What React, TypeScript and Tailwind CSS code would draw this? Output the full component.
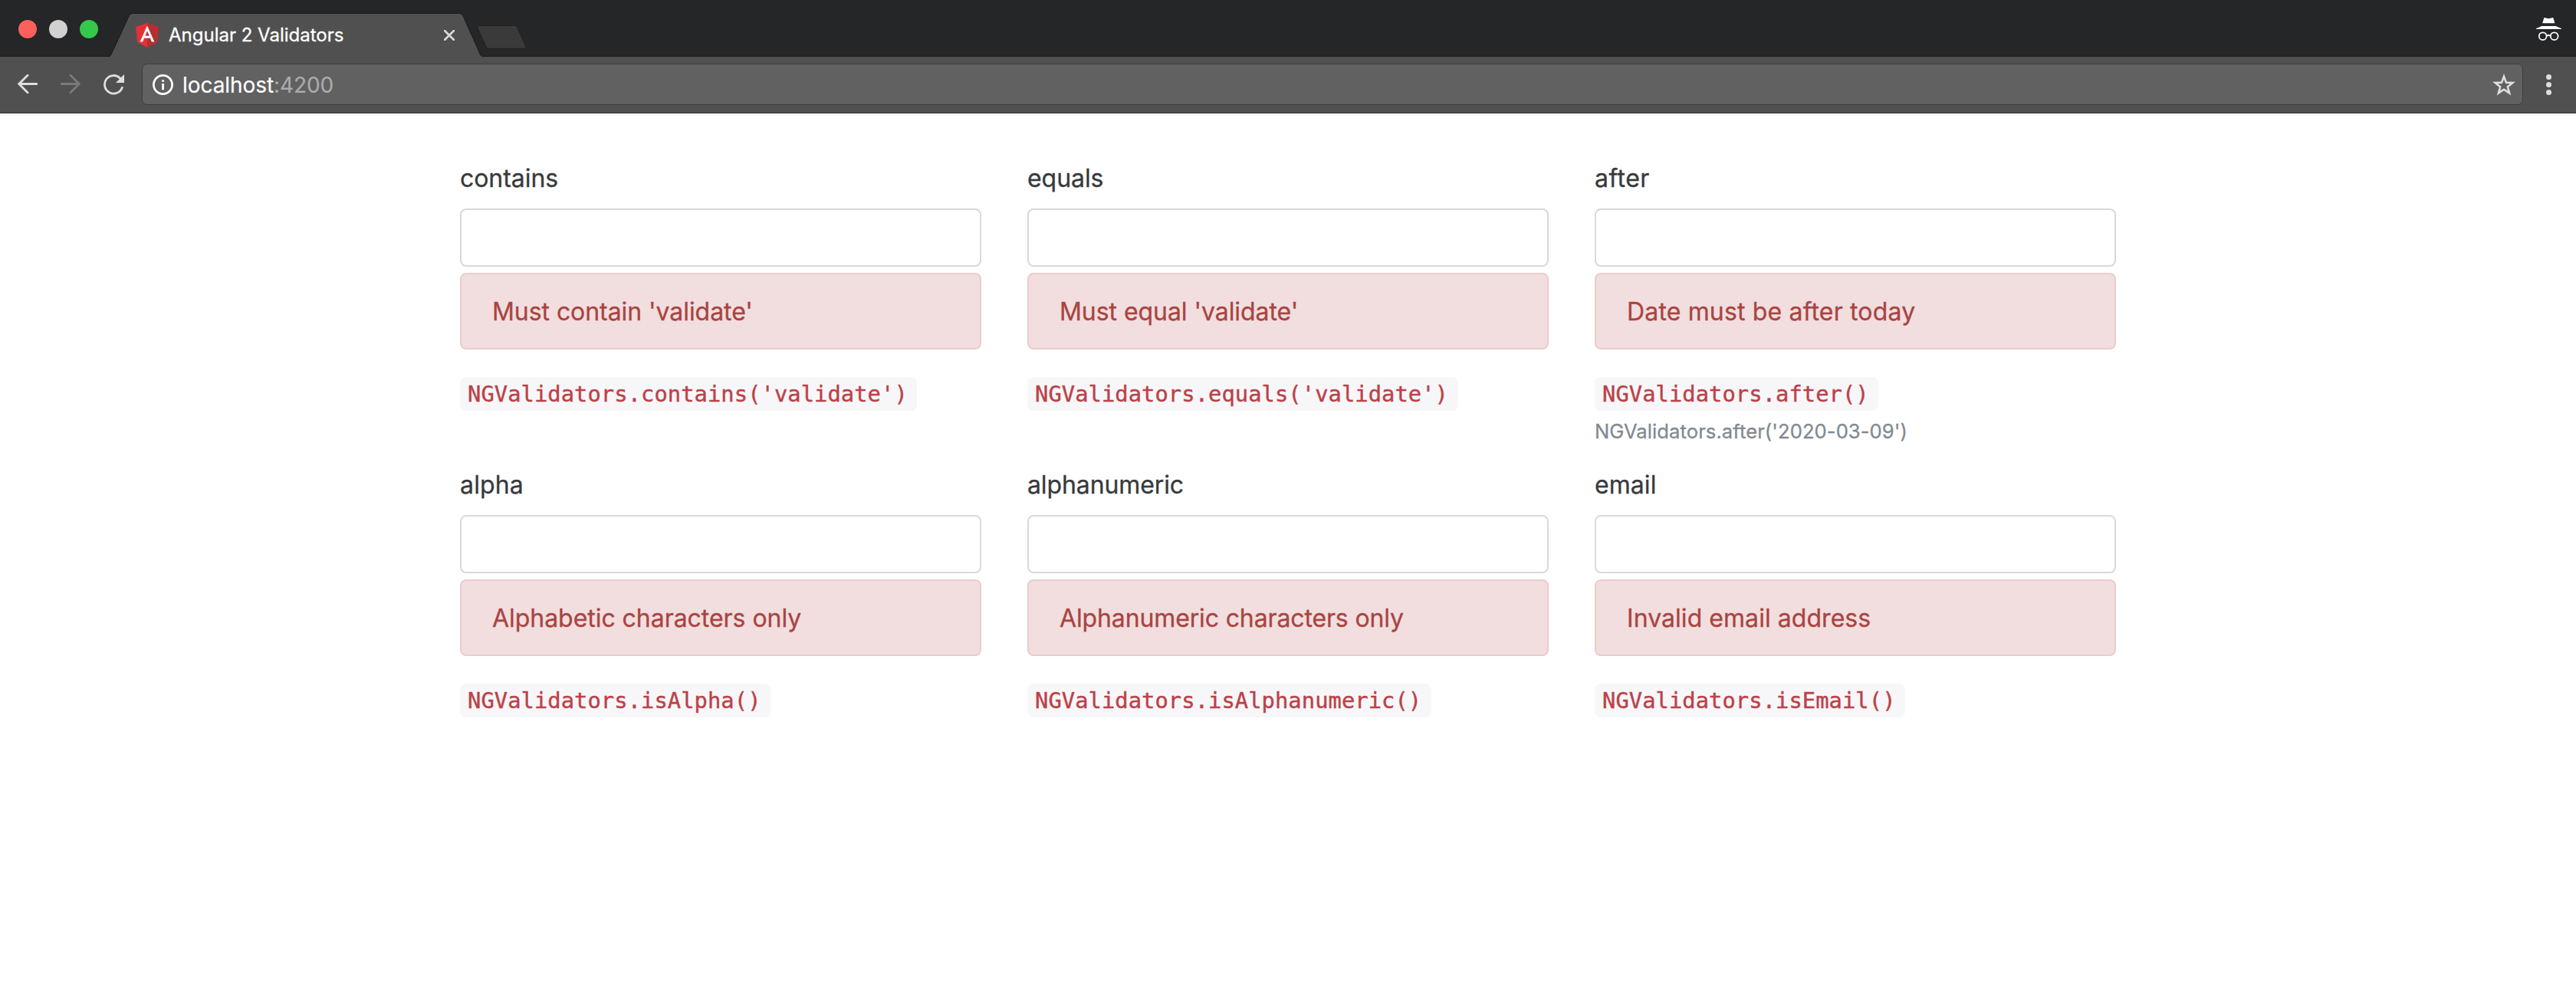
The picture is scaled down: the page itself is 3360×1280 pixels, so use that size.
type Validator = {
  name: string;
  nameClass: string;
  message: string;
  messageClass: string;
  code: string;
  hint?: string;
};

const validators: Validator[] = [
  {
    name: "contains",
    nameClass: "tracking-[-0.05px]",
    message: "Must contain 'validate'",
    messageClass: "tracking-[-0.06px]",
    code: "NGValidators.contains('validate')",
  },
  {
    name: "equals",
    nameClass: "tracking-[-0.06px]",
    message: "Must equal 'validate'",
    messageClass: "tracking-[-0.06px]",
    code: "NGValidators.equals('validate')",
  },
  {
    name: "after",
    nameClass: "tracking-[0.42px]",
    message: "Date must be after today",
    messageClass: "tracking-[0.16px]",
    code: "NGValidators.after()",
    hint: "NGValidators.after('2020-03-09')",
  },
  {
    name: "alpha",
    nameClass: "tracking-[0.16px]",
    message: "Alphabetic characters only",
    messageClass: "tracking-[-0.04px]",
    code: "NGValidators.isAlpha()",
  },
  {
    name: "alphanumeric",
    nameClass: "tracking-[-0.11px]",
    message: "Alphanumeric characters only",
    messageClass: "tracking-[-0.13px]",
    code: "NGValidators.isAlphanumeric()",
  },
  {
    name: "email",
    nameClass: "tracking-[0.07px]",
    message: "Invalid email address",
    messageClass: "tracking-[0.05px]",
    code: "NGValidators.isEmail()",
  },
];

function AngularLogo() {
  return (
    <svg className="h-8 w-[30px]" viewBox="31.9 30 186.2 200" preserveAspectRatio="none">
      <path fill="#e23237" d="M125 30L31.9 63.2l14.2 123.1L125 230l78.9-43.7 14.2-123.1z" />
      <path fill="#b52e31" d="M125 30v200l78.9-43.7 14.2-123.1z" />
      <path
        fill="#fff"
        d="M125 52.1L66.8 182.6h21.7l11.7-29.2h49.4l11.7 29.2H183L125 52.1zm17 83.3h-34l17-40.9 17 40.9z"
      />
    </svg>
  );
}

function IncognitoIcon() {
  return (
    <svg className="h-[30px] w-[33px]" viewBox="0 0 33 30" fill="#fff">
      <path d="M10.4 0L16.3 1.2L22.2 0L24.4 7.2H8.2Z" />
      <path d="M7.2 11H25.6L33 14.3V15H0V14.3Z" />
      <g fill="none" stroke="#fff" strokeWidth="1.8">
        <circle cx="8.7" cy="24.2" r="4.9" />
        <circle cx="23.7" cy="24.2" r="4.9" />
        <path d="M13.4 23.6Q16.2 22.4 19 23.6" />
      </g>
    </svg>
  );
}

function TabStrip() {
  return (
    <div className="flex h-[74px] border-b border-[#1b1c1d] bg-[#252628]">
      <div className="flex gap-4 pt-[26px] pl-6">
        <span className="size-6 rounded-full bg-[#fc605c]" />
        <span className="size-6 rounded-full bg-[#d1d1d1]" />
        <span className="size-6 rounded-full bg-[#34c94a]" />
      </div>
      <div className="relative mt-[17px] ml-[15px] flex h-[57px] w-[486px] items-start pl-[34px]">
        <svg className="absolute inset-0 h-[57px] w-[486px]" viewBox="0 0 486 57">
          <path
            fill="#505050"
            d="M0 57Q1.6 56 2.4 54L25.6 4Q27 1 29.5 1H456.500Q459.300 1 460.700 4L482.600 53Q484 56.300 486 57Z"
          />
          <path
            fill="none"
            stroke="#1b1c1d"
            d="M0 56.500Q1.200 55.500 2 54L25.200 3.500Q26.600 .5 29.500 .5H456.500Q459.700 .5 461.200 3.800L483 53Q484 56 486 56.500"
          />
        </svg>
        <div className="relative mt-[13px]">
          <AngularLogo />
        </div>
        <span className="relative mt-[14px] ml-[13px] w-[359px] text-2xl leading-[30px] text-white [-webkit-text-stroke:0.3px_#fff]">
          Angular 2 Validators
        </span>
        <svg className="relative mt-[22px] h-[14px] w-[14px] shrink-0" viewBox="0 0 14 14">
          <path d="M1 1L13 13M13 1L1 13" stroke="#dadada" strokeWidth="2.500" strokeLinecap="round" />
        </svg>
      </div>
      <svg className="mt-[33px] -ml-[7px] h-[31px] w-[65px]" viewBox="0 0 65 31">
        <path
          fill="#3a3a3a"
          stroke="#1f2021"
          strokeWidth="1"
          d="M2 .5H49.500Q51.500 .5 52.500 2.500L64 28Q65 30.300 62.500 30.300H15.500Q13 30.300 12 28L.8 3Q0 .7 2 .5Z"
        />
      </svg>
      <div className="ml-auto pt-[23px] pr-[19px]">
        <IncognitoIcon />
      </div>
    </div>
  );
}

function Toolbar() {
  return (
    <div className="flex h-[74px] items-start border-b border-[#2b2b2b] bg-[#505050] pt-[9px] pr-8 pl-[23px]">
      <svg className="mt-[14px] h-[26px] w-[26px]" viewBox="0 0 26 26">
        <path
          d="M25 12.500H1.500M13 1.300L1.700 12.500L13 23.700"
          fill="none"
          stroke="#dedede"
          strokeWidth="2.800"
          strokeLinecap="round"
          strokeLinejoin="round"
        />
      </svg>
      <svg className="mt-[14px] ml-[30px] h-[26px] w-[26px]" viewBox="0 0 26 26">
        <path
          d="M1.300 12.500H24.500M13 1.300L24.300 12.500L13 23.700"
          fill="none"
          stroke="#7a7a7a"
          strokeWidth="2.800"
          strokeLinecap="round"
          strokeLinejoin="round"
        />
      </svg>
      <svg className="mt-[14px] ml-[30px] h-[27px] w-[27px]" viewBox="0 0 27 27">
        <path
          d="M24.400 17.300A11.800 11.800 0 1 1 21.600 4.900"
          fill="none"
          stroke="#dedede"
          strokeWidth="2.800"
          strokeLinecap="round"
        />
        <path d="M27 0V11H16Z" fill="#dedede" />
      </svg>
      <div className="ml-[23px] flex h-[54px] flex-1 items-start rounded-[7px] border border-[#3e3e3e] bg-[#616161] pr-[9px] pl-[13px]">
        <svg className="mt-[13px] h-[27px] w-[27px]" viewBox="0 0 27 27">
          <circle cx="13.500" cy="13.500" r="12.100" fill="none" stroke="#fff" strokeWidth="2.700" />
          <path d="M12.200 7.200h2.800v2.600h-2.800zM12.200 12h2.800v8.200h-2.800z" fill="#fff" />
        </svg>
        <span className="mt-2 ml-[12px] text-[28px] leading-[38px] tracking-[-0.07px] text-white [-webkit-text-stroke:0.2px]">
          localhost<span className="text-[#ababab]">:4200</span>
        </span>
        <svg className="mt-3 ml-auto h-[29px] w-[30px]" viewBox="0 0 30 29">
          <path
            fill="#dedede"
            fillRule="evenodd"
            d="M15 0L18.800 10.400L30 10.800L21.300 17.700L24.300 28.500L15 22.300L5.700 28.500L8.700 17.700L0 10.800L11.200 10.400ZM15 7.600L12.900 13L7.200 13.300L11.600 16.800L10.200 22.300L15 19.200L19.800 22.300L18.400 16.800L22.800 13.300L17.100 13Z"
          />
        </svg>
      </div>
      <div className="mt-[14px] ml-[30px] flex w-[7px] flex-col gap-[3.500px]">
        <span className="size-[6.500px] rounded-full bg-[#dedede]" />
        <span className="size-[6.500px] rounded-full bg-[#dedede]" />
        <span className="size-[6.500px] rounded-full bg-[#dedede]" />
      </div>
    </div>
  );
}

function Field({ v }: { v: Validator }) {
  return (
    <div className="flex flex-col items-start">
      <label className="text-[32px] leading-[50px] text-[#373a3c] [-webkit-text-stroke:0.3px]">
        <span className={v.nameClass}>{v.name}</span>
      </label>
      <input
        aria-label={v.name}
        className="mt-[14px] h-[76px] w-full rounded-lg border-2 border-[#d9d9d9] bg-white"
      />
      <div className="mt-2 h-[100px] w-full rounded-lg border-2 border-[#ebcccc] bg-[#f2dede] px-10 py-6 text-[32px] leading-[50px] text-[#a94442] [-webkit-text-stroke:0.3px]">
        <span className={v.messageClass}>{v.message}</span>
      </div>
      <code className="mt-9 h-11 rounded-lg bg-[#f7f7f9] pr-[12.500px] pl-[10px] font-['DejaVu_Sans_Mono',monospace] text-[28.8px] leading-[44px] tracking-[0.05px] text-[#bd4147] [-webkit-text-stroke:0.4px]">
        {v.code}
      </code>
      {v.hint && (
        <small className="mt-2 text-[25.6px] leading-[38px] tracking-[0.07px] text-[#818a91] [-webkit-text-stroke:0.3px]">
          {v.hint}
        </small>
      )}
    </div>
  );
}

export default function App() {
  return (
    <div className="flex h-[1280px] w-[3360px] flex-col overflow-hidden bg-white font-['Inter',sans-serif]">
      <TabStrip />
      <Toolbar />
      <main className="mx-[600px] mt-[60px] grid auto-rows-[400px] grid-cols-3 gap-x-[60px]">
        {validators.map((v) => (
          <Field key={v.name} v={v} />
        ))}
      </main>
    </div>
  );
}
